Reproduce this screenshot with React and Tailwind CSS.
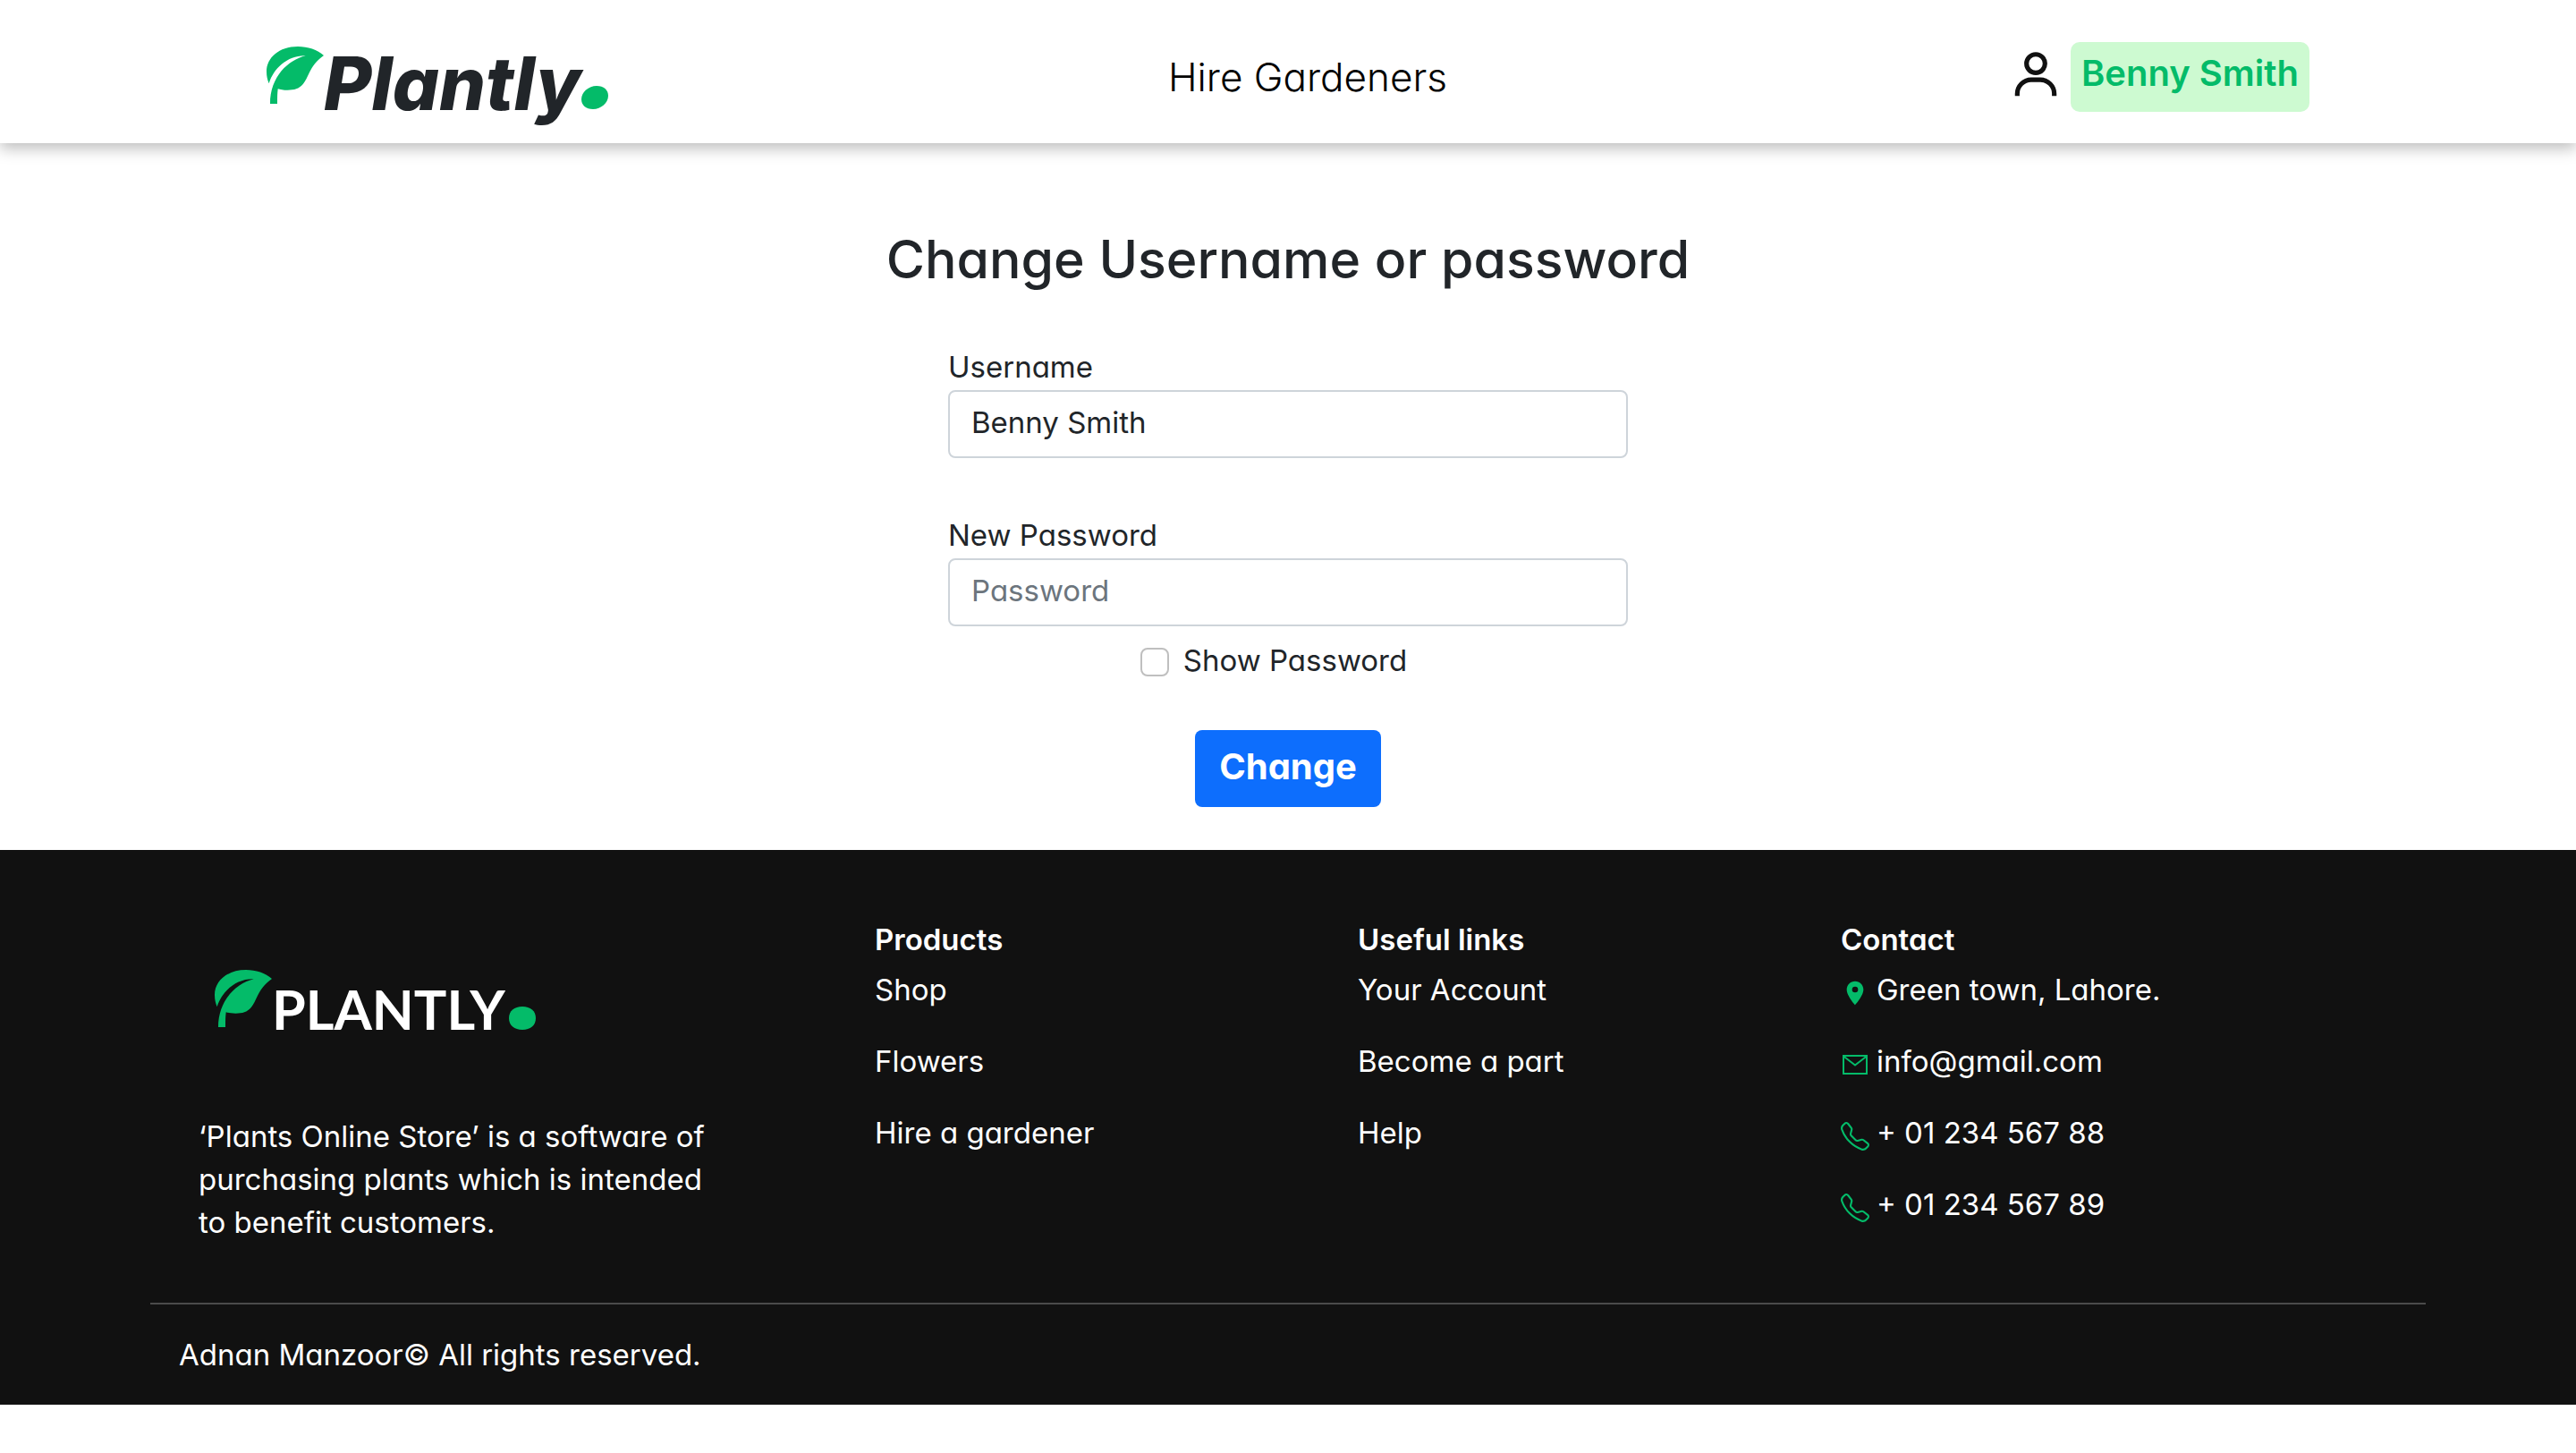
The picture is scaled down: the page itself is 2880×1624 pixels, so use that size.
import { useState } from "react";
import { BiUser } from "react-icons/bi";
import { BsTelephone } from "react-icons/bs";
import { MdLocationOn } from "react-icons/md";

function Leaf() {
  return (
    <svg viewBox="0 0 64 64" className="size-16 fill-[#04bb69]" aria-hidden="true">
      <path d="M64 10C57 3.500 46 0 35 0C14 0 0 12.500 0 28C0 33 1 37.500 2.700 41.300C8 24 24 9.500 43.700 10.300C24 15 4 34 4 64H12C12 57 12 52 12.700 47.200C15 48 19 48.700 23.500 48.700C31 48.700 36.500 47 40.300 42.500C45 37 46.500 31 49.500 26C52.500 20.500 56.500 15.500 64 10Z" />
    </svg>
  );
}

function Dot() {
  return (
    <svg viewBox="0 0 30 26" className="h-[26px] w-[30px] fill-[#04bb69]" aria-hidden="true">
      <path d="M17 0C25 0 30 4.500 30 11C30 19 22 26 13 26C5 26 0 21.500 0 15C0 7 8 0 17 0Z" />
    </svg>
  );
}

function RoundDot() {
  return (
    <svg viewBox="0 0 30 26" className="h-[26px] w-[30px] fill-[#04bb69]" aria-hidden="true">
      <path d="M15 0C24 0 30 5 30 13C30 21 24 26 15 26C6 26 0 21 0 13C0 5 6 0 15 0Z" />
    </svg>
  );
}

function Envelope() {
  return (
    <svg viewBox="0 0 32 32" className="size-8 fill-none stroke-[#04bb69] stroke-2" aria-hidden="true">
      <path d="M3 6H29V26H3ZM3 6.500L16 16.500L29 6.500" />
    </svg>
  );
}

function LinkColumn({ title, links }) {
  return (
    <div>
      <h2 className="mb-2 pt-[2px] text-[33px] leading-[48px] font-semibold">{title}</h2>
      <ul className="flex flex-col gap-8 text-[33px] leading-[48px]">
        {links.map((link) => (
          <li key={link}>
            <a href="#">{link}</a>
          </li>
        ))}
      </ul>
    </div>
  );
}

const contacts = [
  { icon: <MdLocationOn className="size-8 text-[#04bb69]" />, text: "Green town, Lahore.", href: "#" },
  { icon: <Envelope />, text: "info@gmail.com", href: "mailto:info@gmail.com" },
  { icon: <BsTelephone className="size-8 text-[#04bb69]" />, text: "+ 01 234 567 88", href: "tel:+0123456788" },
  { icon: <BsTelephone className="size-8 text-[#04bb69]" />, text: "+ 01 234 567 89", href: "tel:+0123456789" },
];

const inputClass =
  "h-[76px] w-full rounded-lg border-2 border-[#ced4da] bg-white px-6 pb-1 text-[33px] text-[#212529] placeholder:text-[#6c757d] outline-none focus:border-[#86b7fe]";

export default function App() {
  const [name, setName] = useState("Benny Smith");
  const [password, setPassword] = useState("");
  const [show, setShow] = useState(false);

  return (
    <div className="bg-white font-['Inter',sans-serif] text-[#212529] [font-feature-settings:'cv11']">
      <header className="relative grid h-40 grid-cols-[1fr_auto_1fr] items-center bg-white px-[298px] pt-4 shadow-[0_6px_16px_rgba(0,0,0,0.26)]">
        <a href="#" className="flex items-start pt-3">
          <Leaf />
          <span className="text-[82px] leading-[84px] font-extrabold italic">Plantly</span>
          <span className="mt-11">
            <Dot />
          </span>
        </a>
        <a href="#" className="pb-1 pl-11 text-[44px] leading-[60px] font-light text-black">
          Hire Gardeners
        </a>
        <div className="flex items-center gap-2 justify-self-end">
          <BiUser className="mb-2 size-[62px] text-[#111]" />
          <button type="button" className="mb-1 h-[78px] rounded-[10px] bg-[#cdfad1] px-3 pb-2 text-[40px] font-semibold text-[#04bb69]">
            Benny Smith
          </button>
        </div>
      </header>

      <main className="flex flex-col items-center pt-24 pb-12">
        <h1 className="text-[59px] leading-[68px] font-medium">Change Username or password</h1>
        <form className="mt-16 flex w-[760px] flex-col items-center" onSubmit={(e) => e.preventDefault()}>
          <label htmlFor="username" className="self-start pb-1 text-[33px] leading-[44px]">
            Username
          </label>
          <input id="username" type="text" value={name} onChange={(e) => setName(e.target.value)} className={inputClass} />
          <label htmlFor="password" className="mt-16 self-start pb-1 text-[33px] leading-[44px]">
            New Password
          </label>
          <input
            id="password"
            type={show ? "text" : "password"}
            placeholder="Password"
            value={password}
            onChange={(e) => setPassword(e.target.value)}
            className={inputClass}
          />
          <div className="mt-4 flex items-center gap-4 pr-8">
            <input
              id="show"
              type="checkbox"
              checked={show}
              onChange={(e) => setShow(e.target.checked)}
              className="size-8 appearance-none rounded-lg border-2 border-[#bfbfbf] bg-white checked:border-[#0d6efd] checked:bg-[#0d6efd]"
            />
            <label htmlFor="show" className="pb-1 text-[33px] leading-[44px]">
              Show Password
            </label>
          </div>
          <button type="submit" className="mt-[52px] h-[86px] w-52 rounded-lg bg-[#0d6efd] pb-1 text-[40px] font-bold text-white">
            Change
          </button>
        </form>
      </main>

      <footer className="bg-[#111] pt-[74px] text-white">
        <div className="grid grid-cols-[14fr_10fr_10fr_13fr] pr-[120px] pl-[222px]">
          <div>
            <a href="#" className="flex items-start pt-[60px] pl-[18px]">
              <Leaf />
              <span className="pt-2 font-['Lato',sans-serif] text-[61px] leading-[72px] font-bold">PLANTLY</span>
              <span className="mt-[41px] ml-1">
                <RoundDot />
              </span>
            </a>
            <p className="mt-[82px] w-[600px] text-[33px] leading-[48px]">
              ‘Plants Online Store’ is a software of purchasing plants which is intended to benefit customers.
            </p>
          </div>
          <LinkColumn title="Products" links={["Shop", "Flowers", "Hire a gardener"]} />
          <LinkColumn title="Useful links" links={["Your Account", "Become a part", "Help"]} />
          <div>
            <h2 className="mb-2 pt-[2px] text-[33px] leading-[48px] font-semibold">Contact</h2>
            <ul className="flex flex-col gap-8 text-[33px] leading-[48px]">
              {contacts.map(({ icon, text, href }) => (
                <li key={text}>
                  <a href={href} className="flex items-center gap-2">
                    <span className="pt-2">{icon}</span>
                    {text}
                  </a>
                </li>
              ))}
            </ul>
          </div>
        </div>
        <hr className="mx-[168px] mt-[66px] border-t-2 border-[#4b4b4b]" />
        <p className="py-8 pl-[200px] text-[33px] leading-[48px]">Adnan Manzoor© All rights reserved.</p>
      </footer>
    </div>
  );
}
